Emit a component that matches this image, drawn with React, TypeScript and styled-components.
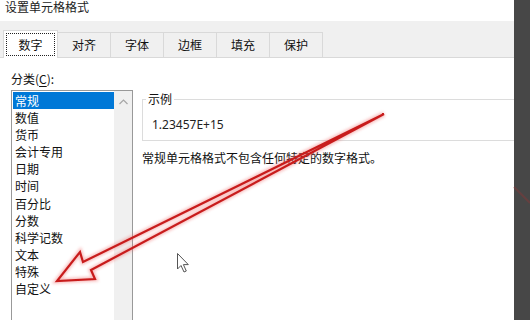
import React from "react";
import styled, { createGlobalStyle } from "styled-components";

const GlobalStyle = createGlobalStyle`
  html, body { margin: 0; padding: 0; background: #fff; }
  body {
    width: 530px; height: 320px; overflow: hidden;
    font-family: "Noto Sans", "Noto Sans CJK SC", sans-serif;
    font-size: 12px; color: #111;
  }
  * { box-sizing: border-box; }
`;

const Page = styled.div`
  position: relative;
  display: flex;
  width: 530px;
  height: 320px;
  overflow: hidden;
`;

const Dialog = styled.div`
  width: 514px;
  height: 320px;
  display: flex;
  flex-direction: column;
  background: #fff;
  overflow: hidden;
`;

const DarkStrip = styled.div`
  width: 16px;
  flex-shrink: 0;
  background: #474747;
`;

const TitleBar = styled.div`
  flex-shrink: 0;
  height: 21px;
  padding: 1px 0 0 5px;
  line-height: 12px;
  font-family: "Noto Sans CJK SC", sans-serif;
  color: #222;
`;

const TabBar = styled.div`
  flex-shrink: 0;
  height: 37px;
  display: flex;
  align-items: flex-end;
  padding-left: 3px;
  background: #f0f0f0;
  border-bottom: 1px solid #d9d9d9;
`;

const Tab = styled.div<{ $active?: boolean }>`
  position: relative;
  font-family: "Noto Sans CJK SC", sans-serif;
  border: 1px solid #d9d9d9;
  border-bottom: none;
  margin-left: -1px;
  &:first-child { margin-left: 0; }
  ${(p) =>
    p.$active
      ? `
    z-index: 1;
    height: 28px;
    width: 55px;
    margin-bottom: -1px;
    background: #fff;
    padding: 2px;
  `
      : `
    height: 25px;
    background: #f0f0f0;
    padding: 4px 14px 0;
    line-height: 16px;
  `}
`;

const FocusRing = styled.div`
  height: 23px;
  border: 1px dotted #222;
  line-height: 21px;
  text-align: center;
`;

const Content = styled.div`
  flex: 1;
  min-height: 0;
  display: flex;
  gap: 9px;
  padding-left: 11px;
`;

const LeftCol = styled.div`
  width: 122px;
  flex-shrink: 0;
  display: flex;
  flex-direction: column;
`;

const Label = styled.div`
  flex-shrink: 0;
  margin-top: 13px;
  line-height: 16px;
  font-family: "Noto Sans CJK SC", sans-serif;
  u { text-decoration: underline; text-underline-offset: 2px; }
`;

const ListBox = styled.div`
  flex-shrink: 0;
  margin-top: 3px;
  height: 240px;
  border: 1px solid #999;
  display: flex;
  padding: 1px 0 0 1px;
`;

const Items = styled.div`
  width: 101px;
  display: flex;
  flex-direction: column;
`;

const Item = styled.div<{ $selected?: boolean }>`
  flex-shrink: 0;
  height: 17.1px;
  line-height: 17px;
  padding-left: 2px;
  font-family: "Noto Sans CJK SC", sans-serif;
  background: ${(p) => (p.$selected ? "#0078d7" : "transparent")};
  color: ${(p) => (p.$selected ? "#fff" : "#111")};
`;

const ScrollBar = styled.div`
  width: 18px;
  margin-top: -1px;
  background: #f0f0f0;
  display: flex;
  justify-content: center;
  align-items: flex-start;
  padding-top: 8px;
`;

const RightCol = styled.div`
  flex: 1;
  min-width: 0;
  display: flex;
  flex-direction: column;
`;

const Group = styled.fieldset`
  flex-shrink: 0;
  margin: 33px 0 0 0;
  padding: 0 0 7px 9px;
  border: 1px solid #dcdcdc;
  border-right: none;
  min-width: 0;
`;

const Legend = styled.legend`
  padding: 0 2px;
  margin-left: -6px;
  line-height: 16px;
  font-family: "Noto Sans CJK SC", sans-serif;
`;

const Sample = styled.div`
  margin-top: 10px;
  line-height: 16px;
  font-family: "Noto Sans", sans-serif;
  color: #222;
`;

const Desc = styled.div`
  flex-shrink: 0;
  margin-top: 9px;
  line-height: 16px;
  font-family: "Noto Sans CJK SC", sans-serif;
`;

const Overlay = styled.svg`
  position: absolute;
  left: 0;
  top: 0;
  pointer-events: none;
`;

const tabs = ["数字", "对齐", "字体", "边框", "填充", "保护"];
const items = ["常规", "数值", "货币", "会计专用", "日期", "时间", "百分比", "分数", "科学记数", "文本", "特殊", "自定义"];

const arrowPts = "384,114 83,262 80,252 57,281 95,279 91,270";

export default function App() {
  return (
    <>
      <GlobalStyle />
      <Page>
        <Dialog>
          <TitleBar>设置单元格格式</TitleBar>
          <TabBar>
            {tabs.map((t, i) =>
              i === 0 ? (
                <Tab key={t} $active>
                  <FocusRing>{t}</FocusRing>
                </Tab>
              ) : (
                <Tab key={t}>{t}</Tab>
              )
            )}
          </TabBar>
          <Content>
            <LeftCol>
              <Label>
                分类(<u>C</u>):
              </Label>
              <ListBox>
                <Items>
                  {items.map((it, i) => (
                    <Item key={it} $selected={i === 0}>
                      {it}
                    </Item>
                  ))}
                </Items>
                <ScrollBar>
                  <svg width="9" height="6" viewBox="0 0 9 6">
                    <polyline points="0.5,5 4.5,1 8.5,5" fill="none" stroke="#a6a6a6" strokeWidth="1.2" />
                  </svg>
                </ScrollBar>
              </ListBox>
            </LeftCol>
            <RightCol>
              <Group>
                <Legend>示例</Legend>
                <Sample>1.23457E+15</Sample>
              </Group>
              <Desc>常规单元格格式不包含任何特定的数字格式。</Desc>
            </RightCol>
          </Content>
        </Dialog>
        <DarkStrip />
        <Overlay width="530" height="320" viewBox="0 0 530 320">
          <defs>
            <filter id="glow" x="-10%" y="-10%" width="120%" height="120%">
              <feGaussianBlur stdDeviation="1.6" />
            </filter>
          </defs>
          <line x1="514" y1="187" x2="530" y2="203" stroke="#7a3b3b" strokeWidth="2" opacity="0.6" />
          <polygon points={arrowPts} fill="none" stroke="#f07070" strokeWidth="5" opacity="0.45" filter="url(#glow)" strokeLinejoin="miter" />
          <polygon points={arrowPts} fill="none" stroke="#c81c1c" strokeWidth="2.2" strokeLinejoin="miter" />
          <path
            d="M177.5 253.5 L177.5 269 L181 265.5 L184 272 L186.3 271 L183.4 264.6 L188.3 264.6 Z"
            fill="#fff"
            stroke="#555"
            strokeWidth="1"
            strokeLinejoin="round"
          />
        </Overlay>
      </Page>
    </>
  );
}
